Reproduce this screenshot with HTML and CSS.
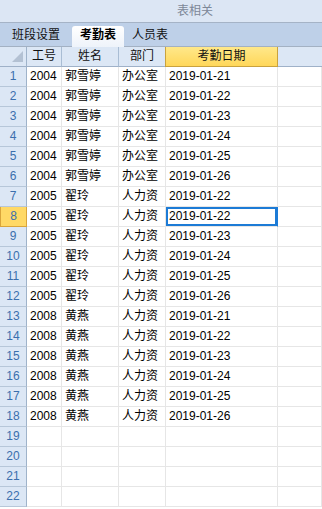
FILE: index.html
```html
<!DOCTYPE html>
<html>
<head>
<meta charset="utf-8">
<link rel="stylesheet" href="styles.css">
</head>
<body>
<div class="app">
  <div class="titlebar"><span class="title">表相关</span></div>
  <div class="tabbar">
    <div class="tab first">班段设置</div>
    <div class="tab active">考勤表</div>
    <div class="tab">人员表</div>
  </div>
  <div class="grid">
    <div class="hc corner"><svg class="tri" width="11" height="11" viewBox="0 0 11 11"><polygon points="11,0 11,11 0,11" fill="#b3c1d3"/></svg></div>
    <div class="hc">工号</div>
    <div class="hc">姓名</div>
    <div class="hc">部门</div>
    <div class="hc sel">考勤日期</div>
    <div class="hc rest"></div>

    <div class="rn">1</div><div class="c">2004</div><div class="c">郭雪婷</div><div class="c">办公室</div><div class="c">2019-01-21</div><div class="c"></div>
    <div class="rn">2</div><div class="c">2004</div><div class="c">郭雪婷</div><div class="c">办公室</div><div class="c">2019-01-22</div><div class="c"></div>
    <div class="rn">3</div><div class="c">2004</div><div class="c">郭雪婷</div><div class="c">办公室</div><div class="c">2019-01-23</div><div class="c"></div>
    <div class="rn">4</div><div class="c">2004</div><div class="c">郭雪婷</div><div class="c">办公室</div><div class="c">2019-01-24</div><div class="c"></div>
    <div class="rn">5</div><div class="c">2004</div><div class="c">郭雪婷</div><div class="c">办公室</div><div class="c">2019-01-25</div><div class="c"></div>
    <div class="rn">6</div><div class="c">2004</div><div class="c">郭雪婷</div><div class="c">办公室</div><div class="c">2019-01-26</div><div class="c"></div>
    <div class="rn">7</div><div class="c">2005</div><div class="c">翟玲</div><div class="c">人力资</div><div class="c">2019-01-22</div><div class="c"></div>
    <div class="rn cur">8</div><div class="c">2005</div><div class="c">翟玲</div><div class="c">人力资</div><div class="c active">2019-01-22</div><div class="c"></div>
    <div class="rn">9</div><div class="c">2005</div><div class="c">翟玲</div><div class="c">人力资</div><div class="c">2019-01-23</div><div class="c"></div>
    <div class="rn">10</div><div class="c">2005</div><div class="c">翟玲</div><div class="c">人力资</div><div class="c">2019-01-24</div><div class="c"></div>
    <div class="rn">11</div><div class="c">2005</div><div class="c">翟玲</div><div class="c">人力资</div><div class="c">2019-01-25</div><div class="c"></div>
    <div class="rn">12</div><div class="c">2005</div><div class="c">翟玲</div><div class="c">人力资</div><div class="c">2019-01-26</div><div class="c"></div>
    <div class="rn">13</div><div class="c">2008</div><div class="c">黄燕</div><div class="c">人力资</div><div class="c">2019-01-21</div><div class="c"></div>
    <div class="rn">14</div><div class="c">2008</div><div class="c">黄燕</div><div class="c">人力资</div><div class="c">2019-01-22</div><div class="c"></div>
    <div class="rn">15</div><div class="c">2008</div><div class="c">黄燕</div><div class="c">人力资</div><div class="c">2019-01-23</div><div class="c"></div>
    <div class="rn">16</div><div class="c">2008</div><div class="c">黄燕</div><div class="c">人力资</div><div class="c">2019-01-24</div><div class="c"></div>
    <div class="rn">17</div><div class="c">2008</div><div class="c">黄燕</div><div class="c">人力资</div><div class="c">2019-01-25</div><div class="c"></div>
    <div class="rn">18</div><div class="c">2008</div><div class="c">黄燕</div><div class="c">人力资</div><div class="c">2019-01-26</div><div class="c"></div>
    <div class="rn">19</div><div class="c"></div><div class="c"></div><div class="c"></div><div class="c"></div><div class="c"></div>
    <div class="rn">20</div><div class="c"></div><div class="c"></div><div class="c"></div><div class="c"></div><div class="c"></div>
    <div class="rn">21</div><div class="c"></div><div class="c"></div><div class="c"></div><div class="c"></div><div class="c"></div>
    <div class="rn">22</div><div class="c"></div><div class="c"></div><div class="c"></div><div class="c"></div><div class="c"></div>
  </div>
</div>
</body>
</html>
```

FILE: styles.css
```css
* { box-sizing: border-box; }
html, body { margin: 0; padding: 0; background: #ffffff; }
body {
  font-family: "Liberation Sans", "Noto Sans CJK SC", sans-serif;
  font-size: 12px;
  color: #000;
  width: 322px;
  height: 509px;
  overflow: hidden;
}
.app { width: 322px; }
.titlebar {
  height: 23px;
  background: #dce6f4;
  border-bottom: 1px solid #a5b3c6;
  display: flex;
  align-items: center;
  padding-left: 177px;
}
.title { color: #7d8898; font-size: 12px; line-height: 14px; }
.tabbar {
  height: 24px;
  background: #bed0e8;
  border-bottom: 1px solid #a3b1c3;
  display: flex;
  align-items: flex-end;
  padding-left: 4px;
}
.tab {
  height: 20px;
  padding: 0 8px;
  line-height: 19px;
  color: #111;
  font-size: 12px;
}
.tab.first { margin-right: 4px; }
.tab.active {
  background: linear-gradient(#ffffff, #eef3fa);
  border-radius: 3px 3px 0 0;
  font-weight: bold;
  color: #000;
  height: 21px;
  margin-bottom: -1px;
}
.grid {
  display: grid;
  grid-template-columns: 27px 35px 57px 47px 112px 1fr;
  grid-auto-rows: 20px;
}
.hc {
  background: #dce7f5;
  border-right: 1px solid #a9bdd4;
  border-bottom: 1px solid #9fb1c8;
  text-align: center;
  line-height: 19px;
  color: #111;
}
.hc.corner {
  display: flex;
  align-items: flex-end;
  justify-content: flex-end;
  padding: 0 3px 4px 0;
  border-right: 1px solid #9fb3ca;
}
.hc.sel {
  background: linear-gradient(#ffe88a, #ffd75a);
  border: 1px solid #c9a23e;
  border-top: 0;
  margin-left: -1px;
}
.hc.rest { border-right: 0; }
.rn {
  background: #dce7f5;
  border-right: 1px solid #9fb3ca;
  border-bottom: 1px solid #b7c7d9;
  color: #3b6fad;
  text-align: center;
  line-height: 19px;
}
.rn.cur {
  background: #ffd966;
  border: 1px solid #d9a53b;
  border-top: 0;
}
.c {
  border-right: 1px solid #e6e6e6;
  border-bottom: 1px solid #e6e6e6;
  padding-left: 3px;
  line-height: 19px;
  white-space: nowrap;
  overflow: hidden;
}
.c.active {
  box-shadow: inset 0 0 0 2px #1c7bd6;
  border-right-color: #1c7bd6;
}
```
